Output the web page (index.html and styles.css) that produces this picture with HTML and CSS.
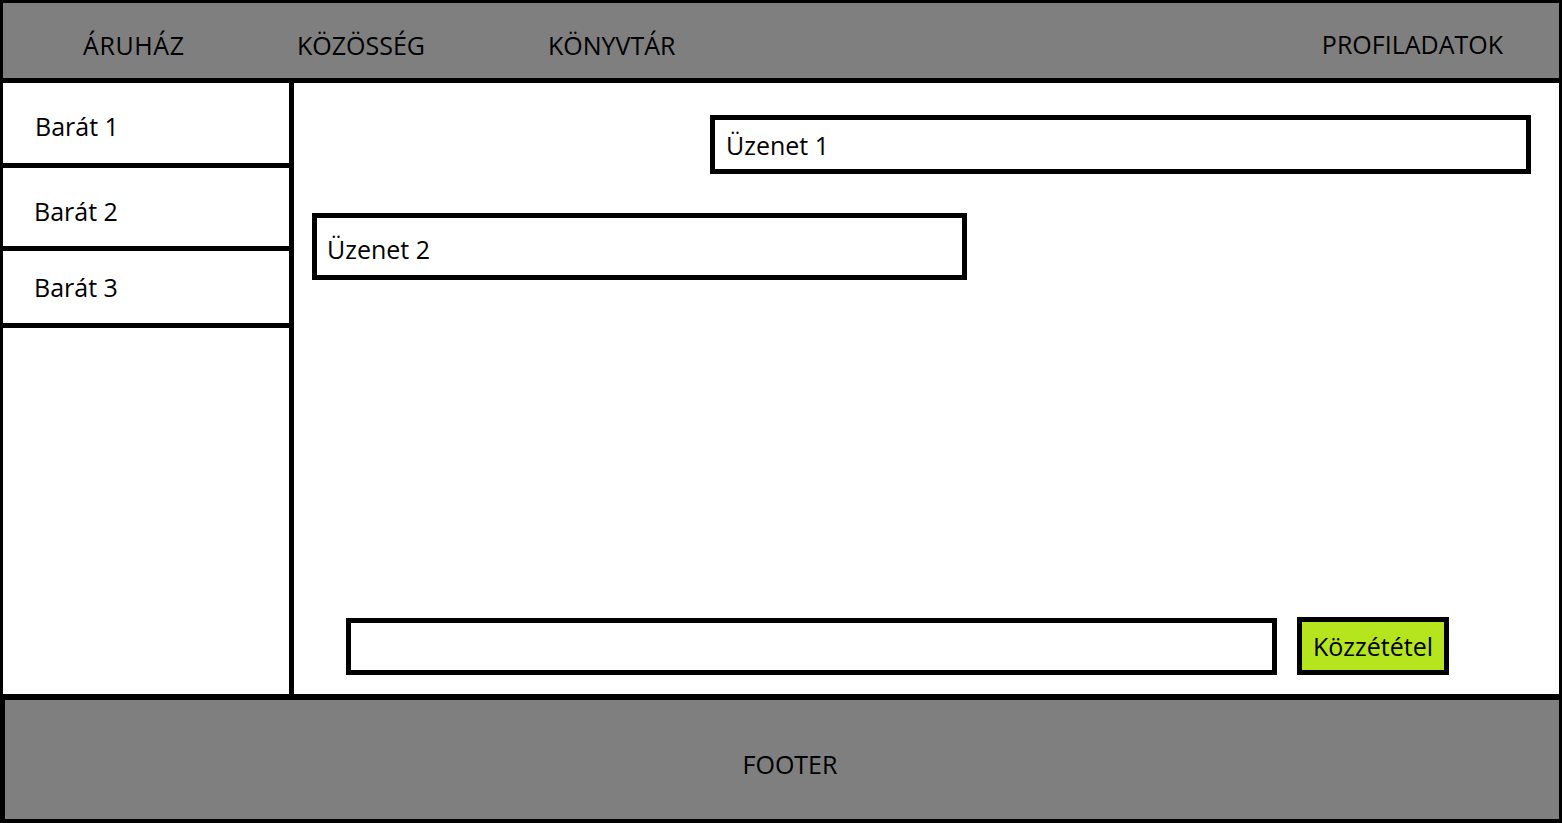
FILE: index.html
```html
<!DOCTYPE html>
<html lang="hu">
<head>
<meta charset="utf-8">
<title>Közösség</title>
<link rel="stylesheet" href="styles.css">
</head>
<body>
<div class="page">
  <header class="topbar">
    <nav class="nav">
      <a class="nav-item nav-store">ÁRUHÁZ</a>
      <a class="nav-item nav-community">KÖZÖSSÉG</a>
      <a class="nav-item nav-library">KÖNYVTÁR</a>
      <a class="nav-item nav-profile">PROFILADATOK</a>
    </nav>
  </header>
  <div class="middle">
    <aside class="sidebar">
      <div class="friend friend-1">Barát 1</div>
      <div class="friend friend-2">Barát 2</div>
      <div class="friend friend-3">Barát 3</div>
    </aside>
    <main class="chat">
      <div class="message message-own">Üzenet 1</div>
      <div class="message message-other">Üzenet 2</div>
      <div class="compose">
        <input class="compose-input" type="text" aria-label="Üzenet">
        <button class="compose-button" type="button">Közzététel</button>
      </div>
    </main>
  </div>
  <footer class="footer">FOOTER</footer>
</div>
</body>
</html>
```

FILE: styles.css
```css
* {
  box-sizing: border-box;
}

html, body {
  margin: 0;
  padding: 0;
  background: #ffffff;
}

body {
  font-family: "Open Sans", "Noto Sans", "Liberation Sans", sans-serif;
  font-size: 25px;
  color: #000000;
}

.page {
  width: 1562px;
  height: 823px;
  display: flex;
  flex-direction: column;
}

/* Header */
.topbar {
  height: 83px;
  flex: none;
  background: #7f7f7f;
  border: 3px solid #000;
  border-bottom-width: 5px;
}

.nav {
  height: 100%;
  display: grid;
  grid-template-columns: 214px 251px 1fr auto;
  align-items: center;
  padding: 8px 56px 0 80px;
  line-height: 34px;
}

.nav-item {
  color: #000;
  text-decoration: none;
  white-space: nowrap;
}

.nav-store {
  letter-spacing: 0.6px;
}

.nav-profile {
  margin-top: -2px;
}

/* Middle area */
.middle {
  flex: 1;
  display: flex;
  min-height: 0;
}

.sidebar {
  width: 294px;
  flex: none;
  border-left: 3px solid #000;
  border-right: 5px solid #000;
  display: flex;
  flex-direction: column;
}

.friend {
  display: flex;
  align-items: center;
  padding: 6px 0 0 32px;
  border-bottom: 5px solid #000;
  line-height: 34px;
}

.friend-1 {
  height: 85px;
}

.friend-2 {
  height: 83px;
  padding-top: 8px;
  padding-left: 31px;
}

.friend-3 {
  height: 77px;
  padding-top: 0;
  padding-left: 31px;
}

.chat {
  flex: 1;
  display: flex;
  flex-direction: column;
  border-right: 3px solid #000;
  min-width: 0;
}

.message {
  border: 5px solid #000;
  display: flex;
  align-items: center;
  padding: 0 0 0 11px;
  line-height: 34px;
}

.message-own {
  width: 821px;
  height: 59px;
  margin: 32px 28px 0 auto;
}

.message-other {
  width: 655px;
  height: 67px;
  margin: 39px 0 0 18px;
  padding-top: 4px;
  padding-left: 10px;
}

.compose {
  margin-top: auto;
  margin-bottom: 19px;
  padding-left: 52px;
  display: flex;
  align-items: flex-end;
  gap: 20px;
}

.compose-input {
  width: 931px;
  height: 57px;
  border: 5px solid #000;
  background: #fff;
  font: inherit;
  padding: 0 10px;
  outline: none;
  margin: 0;
}

.compose-button {
  width: 152px;
  height: 58px;
  border: 5px solid #000;
  background: #b5e61d;
  font: inherit;
  color: #000;
  padding: 0;
  margin: 0;
  line-height: 34px;
}

/* Footer */
.footer {
  height: 129px;
  flex: none;
  background: #7f7f7f;
  border-style: solid;
  border-color: #000;
  border-width: 6px 3px 4px 5px;
  display: flex;
  align-items: center;
  justify-content: center;
  padding: 8px 0 0 16px;
  line-height: 34px;
}
```
